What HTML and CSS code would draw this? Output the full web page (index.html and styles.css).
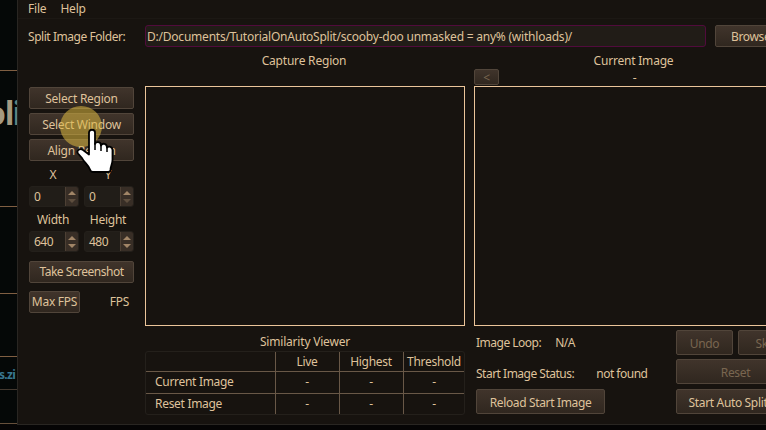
FILE: index.html
```html
<!DOCTYPE html>
<html lang="en">
<head>
<meta charset="utf-8">
<title>AutoSplit</title>
<link rel="stylesheet" href="styles.css">
</head>
<body>
<div class="desktop">
  <aside class="backdrop">
    <div class="band band-top"></div>
    <div class="band band-title"><b>ol<span>i</span></b></div>
    <div class="band band-a"></div>
    <div class="band band-b"></div>
    <div class="band band-link"><span>s.zi</span></div>
    <div class="band band-c"></div>
  </aside>
  <main class="window">
    <nav class="menu"><span>File</span><span>Help</span></nav>
    <div class="folder">
      <label>Split Image Folder:</label>
      <div class="path"><span>D:/Documents/TutorialOnAutoSplit/scooby-doo unmasked = any% (withloads)/</span></div>
      <div class="btn browse">Browse...</div>
    </div>
    <div class="content">
      <section class="controls">
        <div class="btn">Select Region</div>
        <div class="btn">Select Window</div>
        <div class="btn">Align Region</div>
        <div class="fields">
          <label>X</label><label>Y</label>
          <div class="spin"><span>0</span><i class="floor"></i></div>
          <div class="spin"><span>0</span><i class="floor"></i></div>
          <label class="low">Width</label><label class="low">Height</label>
          <div class="spin"><span>640</span><i></i></div>
          <div class="spin"><span>480</span><i></i></div>
        </div>
        <div class="btn shot">Take Screenshot</div>
        <div class="fps"><div class="btn">Max FPS</div><span>FPS</span></div>
      </section>
      <section class="capture">
        <h2>Capture Region</h2>
        <div class="strip"></div>
        <div class="frame"></div>
        <h3>Similarity Viewer</h3>
        <div class="table">
          <div></div><div>Live</div><div>Highest</div><div>Threshold</div>
          <div class="name">Current Image</div><div>-</div><div>-</div><div>-</div>
          <div class="name">Reset Image</div><div>-</div><div>-</div><div>-</div>
        </div>
      </section>
      <section class="current">
        <h2>Current Image</h2>
        <div class="strip"><div class="btn prev off">&lt;</div><span>-</span></div>
        <div class="frame"></div>
        <div class="bottom">
          <div class="status">
            <div class="line loop"><span>Image Loop:</span><span>N/A</span></div>
            <div class="line start"><span>Start Image Status:</span><span>not found</span></div>
            <div class="btn">Reload Start Image</div>
          </div>
          <div class="actions">
            <div class="btn off">Undo</div><div class="btn off">Skip</div>
            <div class="btn off wide">Reset</div>
            <div class="btn wide last">Start Auto Splitter</div>
          </div>
        </div>
      </section>
    </div>
  </main>
  <div class="halo"></div>
  <svg class="hand" width="40" height="48" viewBox="0 0 40 48">
    <path d="M13 4.5C13 .8 19 .8 19 4.5V16C20 13 25 13.500 25 17.500C26.500 14.500 31 15.500 31 19.500C33 17.500 36.500 19 36.500 22V32C36.500 36 34.500 38 34.500 42C34.500 43.500 33.500 44 32 44H17C15.500 44 14.500 43 14 41.500C12.500 37 8 34.500 6 30L2 25.500C0 22.500 4 20 7 22L13 26.500Z" fill="#fff" stroke="#000" stroke-width="1.8" stroke-linejoin="round"/>
    <path d="M19 15V22M25 17V23M31 19V24" fill="none" stroke="#000" stroke-width="1.500"/>
  </svg>
</div>
</body>
</html>
```
FILE: styles.css
```css
* { box-sizing: border-box; }
body { margin: 0; background: #060505; color: #dfc29b; font: 12px/16px "Noto Sans", "Open Sans", sans-serif; letter-spacing: -0.35px; overflow: hidden; }
h2, h3 { margin: 0; font-size: 12px; font-weight: 400; text-align: center; letter-spacing: -0.2px; }
.desktop { position: relative; display: flex; width: 766px; height: 430px; overflow: hidden; }
.backdrop { width: 17px; height: 424px; flex: none; background: #050807; overflow: hidden; }
.band { border-bottom: 1px solid #805f42; overflow: hidden; display: flex; align-items: center; }
.band-top { height: 71px; }
.band-title { height: 136px; }
.band-title b { font: 700 32px/40px "Open Sans", sans-serif; color: #a69a80; margin: -51px 0 0 -14px; letter-spacing: -1px; }
.band-title span { color: #5f8580; margin-left: -1px; }
.band-a { height: 87px; }
.band-b { height: 63px; }
.band-link { height: 33px; border-color: #44392f; }
.band-link span { color: #397891; font: 700 12px/18px "Noto Sans", sans-serif; letter-spacing: -0.7px; margin: 3px 0 0 -1px; }
.band-c { height: 34px; border-color: #66503b; }

.window { width: 749px; height: 425px; flex: none; background: #17130f; border: 1px solid #292622; border-width: 0 0 1px 1px; overflow: hidden; }
.menu { height: 19px; border-bottom: 1px solid #1c1814; padding-left: 10px; display: flex; gap: 14px; line-height: 17px; letter-spacing: -0.2px; }
.folder { display: flex; height: 22px; margin: 6px 0 0 10px; }
.folder label { width: 117px; flex: none; line-height: 23px; letter-spacing: -0.45px; }
.path { width: 561px; flex: none; border: 1px solid #510b3c; border-radius: 3px; background: #211c17; padding-left: 1px; line-height: 22px; white-space: nowrap; letter-spacing: -0.22px; }
.btn { height: 22px; border: 1px solid #51453a; border-radius: 2px; background: linear-gradient(#40342b, #30271f); display: flex; align-items: center; justify-content: center; white-space: nowrap; padding-top: 2px; }
.btn.off { color: #796650; }
.browse { width: 80px; flex: none; margin-left: 9px; padding-top: 1px; }
.content { display: flex; margin-left: 11px; }
.controls { width: 105px; flex: none; padding-top: 40px; letter-spacing: -0.25px; }
.controls > .btn { margin-bottom: 4px; }
.fields { display: grid; grid-template-columns: 50px 50px; column-gap: 5px; }
.fields label { height: 21px; line-height: 20px; text-align: center; padding-right: 2px; }
.fields .low { height: 24px; line-height: 25px; }
.spin { height: 21px; display: flex; justify-content: space-between; border: 1px solid #24201b; border-radius: 3px; background: #211d18; padding-left: 4px; line-height: 20px; letter-spacing: -0.5px; overflow: hidden; }
.spin i { width: 14px; margin: -1px; border: 1px solid #4d4034; background: #382e26; display: flex; flex-direction: column; align-items: center; justify-content: center; gap: 4px; }
.spin i::before, .spin i::after { content: ""; border: 4px solid transparent; }
.spin i::before { border-top: 0; border-bottom-color: #a18567; }
.spin i::after { border-bottom: 0; border-top-color: #a18567; }
.spin .floor::after { border-top-color: #5e4e3e; }
.controls .shot { margin: 9px 0 8px; letter-spacing: -0.5px; padding-top: 0; }
.fps { display: flex; justify-content: space-between; line-height: 22px; padding-right: 5px; }
.fps .btn { width: 51px; padding-top: 0; }
.capture { width: 320px; flex: none; margin-left: 11px; }
.current { width: 321px; flex: none; margin-left: 9px; }
h2 { height: 22px; padding: 6px 2px 0 0; }
.strip { height: 17px; display: grid; grid-template-columns: 25px 1fr 25px; text-align: center; }
.strip .btn { height: 16px; }
.strip span { line-height: 18px; }
.frame { height: 240px; border: 1px solid #ebc59a; }
h3 { height: 25px; padding-top: 8px; }
.table { display: grid; grid-template-columns: 130px 64px 64px 60px; grid-template-rows: 20px 22px 20px; border: 1px solid #24201b; border-radius: 3px; text-align: center; line-height: 20px; letter-spacing: -0.3px; }
.table div { border: solid #695847; border-width: 0 1px 1px 0; padding-right: 1px; white-space: nowrap; }
.table div:nth-child(4n) { border-right: 0; padding-right: 0; }
.table div:nth-child(n+9) { border-bottom: 0; }
.table .name { text-align: left; padding-left: 9px; }
.bottom { display: flex; justify-content: space-between; padding-top: 4px; }
.status { padding-left: 2px; width: 190px; }
.status .btn { width: 129px; height: 25px; }
.line { display: flex; white-space: nowrap; letter-spacing: -0.5px; }
.loop { height: 28px; line-height: 26px; gap: 14px; }
.start { height: 31px; line-height: 32px; gap: 22px; }
.actions { display: grid; grid-template-columns: 57px 57px; grid-template-rows: 25px 25px 25px; column-gap: 5px; row-gap: 4px; }
.actions .btn { height: 25px; }
.wide { grid-column: span 2; }
.last { margin-top: 1px; }

.halo { position: absolute; left: 60px; top: 106px; width: 42px; height: 41px; border-radius: 50%; background: rgba(222, 186, 65, .55); }
.hand { position: absolute; left: 76px; top: 128px; }
```
